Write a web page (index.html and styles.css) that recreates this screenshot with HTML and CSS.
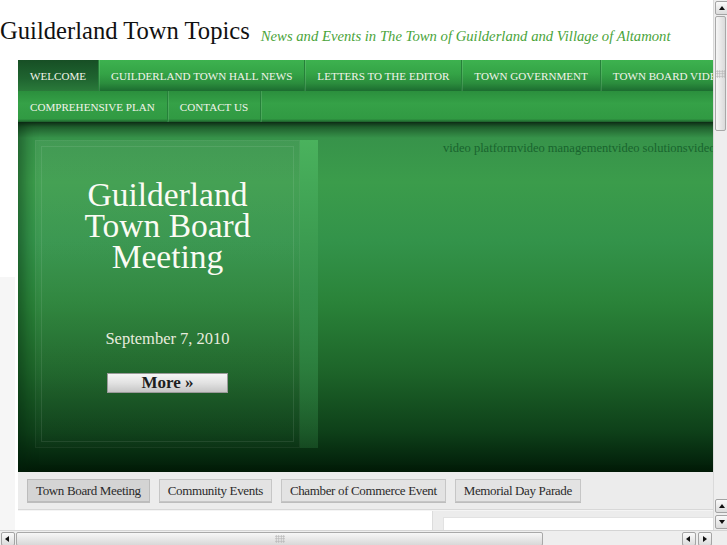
FILE: index.html
```html
<!DOCTYPE html>
<html lang="en">
<head>
    <meta charset="UTF-8">
    <title>Guilderland Town Topics</title>
    <link rel="stylesheet" href="styles.css">
</head>
<body>
    <div class="window">
        <div class="viewport">
            <div class="header">
                <h1 class="title">Guilderland Town Topics</h1>
                <span class="tagline">News and Events in The Town of Guilderland and Village of Altamont</span>
            </div>
            <div class="site">
                <div class="nav">
                    <div class="nav-row top">
                        <a class="active">WELCOME</a>
                        <a>GUILDERLAND TOWN HALL NEWS</a>
                        <a>LETTERS TO THE EDITOR</a>
                        <a>TOWN GOVERNMENT</a>
                        <a>TOWN BOARD VIDEOS</a>
                    </div>
                    <div class="nav-row bottom">
                        <a>COMPREHENSIVE PLAN</a>
                        <a>CONTACT US</a>
                    </div>
                </div>
                <div class="hero">
                    <div class="panel">
                        <div class="panel-inner">
                            <div class="hero-title">Guilderland<br>Town Board<br>Meeting</div>
                            <div class="hero-date">September 7, 2010</div>
                            <button class="more">More &raquo;</button>
                        </div>
                    </div>
                    <div class="strip"></div>
                    <div class="stage">
                        <div class="video-links">video platformvideo managementvideo solutionsvideo player</div>
                    </div>
                </div>
                <div class="tabs">
                    <button class="tab active">Town Board Meeting</button>
                    <button class="tab">Community Events</button>
                    <button class="tab">Chamber of Commerce Event</button>
                    <button class="tab">Memorial Day Parade</button>
                </div>
                <div class="below">
                    <div class="main-col"></div>
                    <div class="side-col"><div class="side-box"></div></div>
                </div>
            </div>
        </div>
        <div class="vscroll">
            <div class="sbtn up"></div>
            <div class="vthumb"><span class="grip"></span></div>
            <div class="vtrack"></div>
            <div class="sbtn up"></div>
            <div class="sbtn down"></div>
        </div>
        <div class="hscroll">
            <div class="sbtn left"></div>
            <div class="hthumb"><span class="grip"></span></div>
            <div class="htrack"></div>
            <div class="sbtn left"></div>
            <div class="sbtn right"></div>
            <div class="corner"></div>
        </div>
    </div>
</body>
</html>
```

FILE: styles.css
```css
html, body {
    margin: 0;
    padding: 0;
    background: #fff;
}

.window {
    width: 727px;
    height: 545px;
    display: grid;
    grid-template-columns: 713px 14px;
    grid-template-rows: 530px 15px;
    overflow: hidden;
    font-family: "Liberation Serif", serif;
}

.viewport {
    overflow: hidden;
    background: linear-gradient(#fff 277px, #f6f6f6 277px) no-repeat 0 0 / 15px 100%;
}

/* header */
.header {
    height: 60px;
    display: flex;
    align-items: flex-start;
    gap: 11px;
    white-space: nowrap;
}
.title {
    margin: 0;
    padding-top: 17px;
    font-size: 24.6px;
    line-height: 28px;
    font-weight: normal;
    color: #111;
}
.tagline {
    padding-top: 27px;
    font-style: italic;
    font-size: 14.7px;
    line-height: 18px;
    color: #4aa43a;
}

/* site */
.site {
    margin-left: 18px;
    width: 760px;
}

.nav-row {
    height: 31px;
    display: flex;
    white-space: nowrap;
}
.nav-row.top {
    background: linear-gradient(#3db24f 0%, #34a346 45%, #2b8d3d 75%, #1c6c30 100%);
}
.nav-row.bottom {
    background: linear-gradient(#2b8f3d 0%, #35a147 40%, #319a43 90%, #1d5f2b 100%);
}
.nav-row a {
    display: flex;
    align-items: center;
    padding: 0 12px;
    font-size: 11.1px;
    color: #f2f4ea;
    border-right: 1px solid #26803a;
    box-shadow: 1px 0 0 rgba(255,255,255,0.12);
}
.nav-row a.active {
    background: linear-gradient(#174f25 0%, #1f6430 60%, #2a7a3a 100%);
}

/* hero */
.hero {
    height: 350px;
    display: flex;
    background: linear-gradient(#0e2d16 0px, #1f5f2d 5px, #37934a 16px, #3b9c4b 60px, #33934a 120px, #2a8339 180px, #1d6429 250px, #0e4019 310px, #04240c 340px, #021a07 350px);
    box-shadow: inset 14px 0 14px -8px rgba(0,30,10,0.45);
}
.panel {
    width: 265px;
    height: 308px;
    margin: 18px 0 0 17px;
    background: linear-gradient(rgba(255,255,255,0.06), rgba(255,255,255,0.01));
    box-shadow: inset 0 0 0 1px rgba(255,255,255,0.05);
    padding: 6px;
    box-sizing: border-box;
}
.panel-inner {
    height: 100%;
    border: 1px solid rgba(255,255,255,0.09);
    box-sizing: border-box;
    display: flex;
    flex-direction: column;
    align-items: center;
    padding-top: 32px;
}
.hero-title {
    font-size: 33.5px;
    line-height: 31px;
    text-align: center;
    color: #fbfbf4;
}
.hero-date {
    margin-top: 57px;
    font-size: 16.5px;
    color: #e8ecdf;
}
.more {
    margin-top: 24px;
    width: 121px;
    height: 20px;
    padding: 0;
    border: 1px solid #9a9a9a;
    background: linear-gradient(#f6f6f6, #e2e2e2 50%, #c6c6c6);
    font-family: "Liberation Serif", serif;
    font-weight: bold;
    font-size: 17px;
    line-height: 18px;
    color: #1e1e1e;
}
.strip {
    width: 18px;
    height: 308px;
    margin-top: 18px;
    background: linear-gradient(#4ab25d, #34904a 50%, rgba(40,110,55,0.4));
}
.stage {
    flex: 1;
}
.video-links {
    padding: 19px 0 0 125px;
    font-size: 12.5px;
    color: #18642e;
    white-space: nowrap;
}

/* tabs */
.tabs {
    height: 38px;
    box-sizing: border-box;
    background: #ececec;
    border-bottom: 1px solid #d8d8d8;
    display: flex;
    align-items: flex-start;
    gap: 9px;
    padding: 7px 0 0 9px;
}
.tab {
    height: 23px;
    padding: 0 8px;
    background: #e3e3e3;
    border: 1px solid #c6c6c6;
    box-shadow: 0 1px 0 #bdbdbd;
    font-family: "Liberation Serif", serif;
    font-size: 13px;
    letter-spacing: -0.35px;
    color: #2b2b2b;
}
.tab.active {
    background: #d4d4d4;
    border-color: #bcbcbc;
}

.below {
    display: flex;
    height: 40px;
    border-top: 1px solid #f4f4f4;
}
.main-col {
    width: 414px;
    background: #fff;
}
.side-col {
    flex: 1;
    background: #ececec;
    border-left: 1px solid #dcdcdc;
    padding: 6px 0 0 10px;
}
.side-box {
    height: 40px;
    background: #fff;
    border: 1px solid #e2e2e2;
}

/* scrollbars */
.vscroll {
    display: flex;
    flex-direction: column;
    background: #eeeeee;
    border-left: 1px solid #dadada;
}
.hscroll {
    grid-column: 1 / 3;
    display: flex;
    background: #eeeeee;
    border-top: 1px solid #d4d4d4;
}
.sbtn {
    width: 12px;
    height: 12px;
    margin: 1px;
    border: 1px solid #a4a4a4;
    border-radius: 2px;
    background: linear-gradient(#fafafa, #dcdcdc);
    position: relative;
    flex: none;
}
.sbtn::after {
    content: "";
    position: absolute;
    left: 3px;
    top: 4px;
    border: 3px solid transparent;
}
.sbtn.up::after { border-bottom: 4px solid #111; top: 1px; }
.sbtn.down::after { border-top: 4px solid #111; top: 4px; }
.sbtn.left::after { border-right: 4px solid #111; left: 0; top: 3px; }
.sbtn.right::after { border-left: 4px solid #111; left: 4px; top: 3px; }

.vthumb {
    height: 113px;
    margin: 0 1px;
    border: 1px solid #a8a8a8;
    border-radius: 2px;
    background: linear-gradient(90deg, #f6f6f6, #dadada);
    display: flex;
    align-items: center;
    justify-content: center;
}
.vtrack { flex: 1; }
.hthumb {
    width: 525px;
    height: 12px;
    margin: 1px 0;
    border: 1px solid #a8a8a8;
    border-radius: 2px;
    background: linear-gradient(#f6f6f6, #d8d8d8);
    display: flex;
    align-items: center;
    justify-content: center;
}
.htrack { flex: 1; }
.corner { width: 14px; }
.grip {
    width: 10px;
    height: 8px;
    background: radial-gradient(circle, #b8b8b8 0.8px, transparent 1px) 0 0 / 2.5px 2.5px;
}
```
